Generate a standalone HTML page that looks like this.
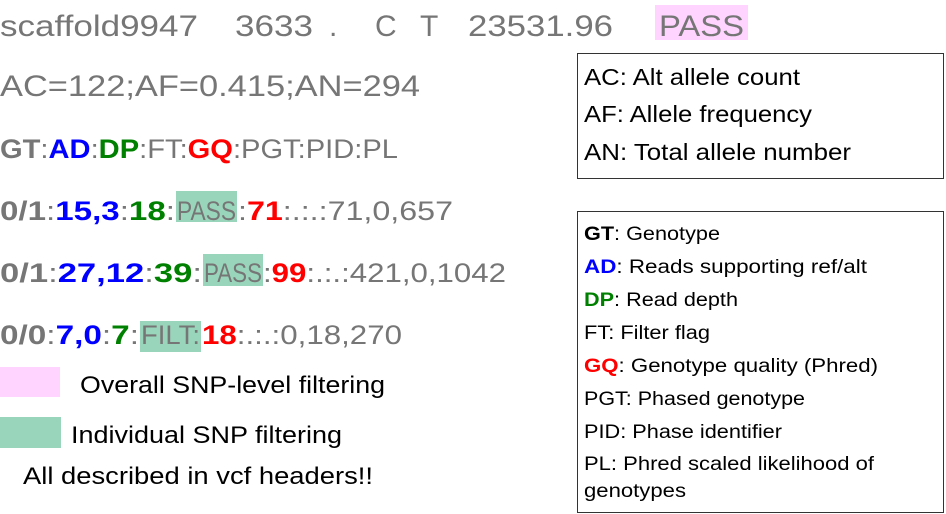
<!DOCTYPE html>
<html><head><meta charset="utf-8"><style>
html,body{margin:0;padding:0;background:#fff;width:946px;height:514px;overflow:hidden}
svg{display:block}
text{font-family:"Liberation Sans",sans-serif}
</style></head><body>
<svg width="946" height="514" viewBox="0 0 946 514" xmlns="http://www.w3.org/2000/svg">
<rect x="655" y="5" width="93" height="35" fill="#ffd5ff"/>
<g fill="#767676" font-size="30">
<text x="0" y="36" textLength="198" lengthAdjust="spacingAndGlyphs">scaffold9947</text>
<text x="235" y="36" textLength="78" lengthAdjust="spacingAndGlyphs">3633</text>
<text x="329" y="36">.</text>
<text x="375" y="36">C</text>
<text x="420" y="36">T</text>
<text x="468" y="36" textLength="145" lengthAdjust="spacingAndGlyphs">23531.96</text>
<text x="659" y="36" textLength="85" lengthAdjust="spacingAndGlyphs">PASS</text>
<text x="0" y="96" textLength="420" lengthAdjust="spacingAndGlyphs">AC=122;AF=0.415;AN=294</text>
</g>
<rect x="176" y="191" width="61" height="31" fill="#99d5bb"/>
<rect x="203" y="254" width="60" height="32" fill="#99d5bb"/>
<rect x="140" y="321" width="61" height="31" fill="#99d5bb"/>
<g font-size="27" fill="#767676">
<text x="0" y="158" textLength="398" lengthAdjust="spacingAndGlyphs"><tspan font-weight="bold">GT</tspan>:<tspan font-weight="bold" fill="#0000ff">AD</tspan>:<tspan font-weight="bold" fill="#008000">DP</tspan>:FT:<tspan font-weight="bold" fill="#ff0000">GQ</tspan>:PGT:PID:PL</text>
<text x="0" y="220" textLength="175" lengthAdjust="spacingAndGlyphs"><tspan font-weight="bold">0/1</tspan>:<tspan font-weight="bold" fill="#0000ff">15,3</tspan>:<tspan font-weight="bold" fill="#008000">18</tspan>:</text>
<text x="177" y="220" textLength="59" lengthAdjust="spacingAndGlyphs">PASS</text>
<text x="238" y="220" textLength="215" lengthAdjust="spacingAndGlyphs">:<tspan font-weight="bold" fill="#ff0000">71</tspan>:.:.:71,0,657</text>
<text x="0" y="282" textLength="202" lengthAdjust="spacingAndGlyphs"><tspan font-weight="bold">0/1</tspan>:<tspan font-weight="bold" fill="#0000ff">27,12</tspan>:<tspan font-weight="bold" fill="#008000">39</tspan>:</text>
<text x="204" y="282" textLength="58" lengthAdjust="spacingAndGlyphs">PASS</text>
<text x="263" y="282" textLength="243" lengthAdjust="spacingAndGlyphs">:<tspan font-weight="bold" fill="#ff0000">99</tspan>:.:.:421,0,1042</text>
<text x="0" y="344" textLength="139" lengthAdjust="spacingAndGlyphs"><tspan font-weight="bold">0/0</tspan>:<tspan font-weight="bold" fill="#0000ff">7,0</tspan>:<tspan font-weight="bold" fill="#008000">7</tspan>:</text>
<text x="141" y="344" textLength="59" lengthAdjust="spacingAndGlyphs">FILT:</text>
<text x="202" y="344" textLength="200" lengthAdjust="spacingAndGlyphs"><tspan font-weight="bold" fill="#ff0000">18</tspan>:.:.:0,18,270</text>
</g>
<rect x="0" y="367" width="60" height="30" fill="#ffd5ff"/>
<rect x="0" y="417" width="61" height="31" fill="#99d5bb"/>
<g font-size="24" fill="#000">
<text x="80" y="393" textLength="305" lengthAdjust="spacingAndGlyphs">Overall SNP-level filtering</text>
<text x="71" y="443" textLength="271" lengthAdjust="spacingAndGlyphs">Individual SNP filtering</text>
<text x="23" y="484" textLength="350" lengthAdjust="spacingAndGlyphs">All described in vcf headers!!</text>
</g>
<rect x="577.5" y="53.5" width="366" height="125" fill="none" stroke="#333" stroke-width="1"/>
<g font-size="23" fill="#000">
<text x="584" y="85" textLength="216" lengthAdjust="spacingAndGlyphs">AC: Alt allele count</text>
<text x="584" y="122" textLength="228" lengthAdjust="spacingAndGlyphs">AF: Allele frequency</text>
<text x="584" y="160" textLength="267" lengthAdjust="spacingAndGlyphs">AN: Total allele number</text>
</g>
<rect x="577.5" y="211.5" width="366" height="301" fill="none" stroke="#333" stroke-width="1"/>
<g font-size="19" fill="#000">
<text x="584" y="240" textLength="136" lengthAdjust="spacingAndGlyphs"><tspan font-weight="bold">GT</tspan>: Genotype</text>
<text x="584" y="273" textLength="283" lengthAdjust="spacingAndGlyphs"><tspan font-weight="bold" fill="#0000ff">AD</tspan>: Reads supporting ref/alt</text>
<text x="584" y="306" textLength="154" lengthAdjust="spacingAndGlyphs"><tspan font-weight="bold" fill="#008000">DP</tspan>: Read depth</text>
<text x="584" y="339" textLength="126" lengthAdjust="spacingAndGlyphs">FT: Filter flag</text>
<text x="584" y="372" textLength="294" lengthAdjust="spacingAndGlyphs"><tspan font-weight="bold" fill="#ff0000">GQ</tspan>: Genotype quality (Phred)</text>
<text x="584" y="405" textLength="221" lengthAdjust="spacingAndGlyphs">PGT: Phased genotype</text>
<text x="584" y="438" textLength="198" lengthAdjust="spacingAndGlyphs">PID: Phase identifier</text>
<text x="584" y="470" textLength="290" lengthAdjust="spacingAndGlyphs">PL: Phred scaled likelihood of</text>
<text x="584" y="497" textLength="102" lengthAdjust="spacingAndGlyphs">genotypes</text>
</g>
</svg>
</body></html>
